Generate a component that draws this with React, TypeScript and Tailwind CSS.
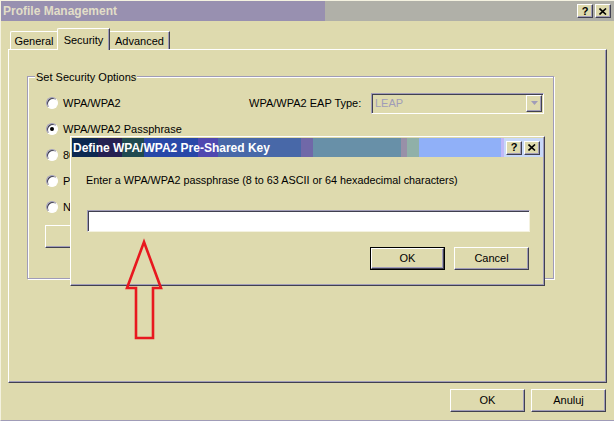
import React from "react";

const FACE = "bg-[#dedaae]";

function Btn({ label, w, def }: { label: string; w: string; def?: boolean }) {
  const inner = (
    <div
      className={`${def ? "w-full h-full" : w + " h-[23px]"} flex items-center justify-center ${FACE} border border-t-white border-l-white border-r-[#404050] border-b-[#404050] shadow-[inset_-1px_-1px_0_#a09cb8]`}
    >
      {label}
    </div>
  );
  if (def) {
    return <div className={`${w} h-[23px] border border-black`}>{inner}</div>;
  }
  return inner;
}

function TitleBtn({ kind }: { kind: "help" | "close" }) {
  return (
    <div className={`w-[16px] h-[14px] ${FACE} border border-t-white border-l-white border-r-[#404050] border-b-[#404050] shadow-[inset_-1px_-1px_0_#a09cb8] flex items-center justify-center`}>
      {kind === "help" ? (
        <span className="font-bold text-[11px] leading-none text-black">?</span>
      ) : (
        <svg width="8" height="7" viewBox="0 0 8 7">
          <path d="M0.5 0.5 L7 6.5 M7 0.5 L0.5 6.5" stroke="black" strokeWidth="1.6" fill="none" />
        </svg>
      )}
    </div>
  );
}

function Radio({ checked }: { checked?: boolean }) {
  return (
    <div className="w-[12px] h-[12px] rounded-full border border-t-[#a09cb8] border-l-[#a09cb8] border-r-white border-b-white shadow-[inset_1px_1px_0_#404050] bg-white flex items-center justify-center shrink-0">
      {checked && <div className="w-[4px] h-[4px] rounded-full bg-black" />}
    </div>
  );
}

export default function App() {
  return (
    <div className={`relative w-[614px] h-[421px] overflow-hidden ${FACE} font-['Liberation_Sans',Arial,sans-serif] text-[11px] text-black`}>
      {/* main window */}
      <div className="w-full h-full flex flex-col border-t border-l border-[#f4f2e0] border-b border-b-[#a09cb8]">
        {/* title bar */}
        <div className="h-[20px] flex items-center bg-[linear-gradient(to_right,#9890b0_0,#9890b0_324px,#b0b0a8_324px)] pr-[3px]">
          <span className="pl-[2px] font-bold text-[#e2dec8] text-[12px]">Profile Management</span>
          <div className="ml-auto flex gap-[2px]">
            <TitleBtn kind="help" />
            <TitleBtn kind="close" />
          </div>
        </div>

        <div className="pl-[7px] w-[606px]">
          {/* tabs */}
          <div className="h-[28px] flex items-end pl-[2px]">
            <div className="w-[47px] h-[18px] border-t border-l border-white rounded-tl-[2px] flex items-center justify-center pt-[1px]">
              General
            </div>
            <div className={`relative z-10 -mb-px w-[53px] h-[22px] ${FACE} border-t border-l border-white border-r border-r-[#404050] shadow-[inset_-1px_0_0_#a09cb8] rounded-tl-[2px] flex items-start justify-center pt-[3px]`}>
              Security
            </div>
            <div className="w-[60px] h-[18px] border-t border-white border-r border-r-[#404050] shadow-[inset_-1px_0_0_#a09cb8] flex items-center justify-center pt-[1px]">
              Advanced
            </div>
          </div>

          {/* tab panel */}
          <div className="h-[334px] border border-t-white border-l-white border-r-[#404050] border-b-[#404050] shadow-[inset_-1px_-1px_0_#a09cb8] pt-[26px] pl-[18px]">
            <div className="relative w-[527px] h-[203px] border border-[#a09cb8] shadow-[inset_1px_1px_0_white,1px_1px_0_white]">
              <span className={`absolute -top-[8px] left-[7px] px-[1px] ${FACE}`}>Set Security Options</span>
              <div className="flex flex-col pt-[13px] pl-[18px]">
                <div className="h-[26px] flex items-center">
                  <div className="w-[203px] flex items-center gap-[5px]">
                    <Radio />
                    <span>WPA/WPA2</span>
                  </div>
                  <span className="w-[122px]">WPA/WPA2 EAP Type:</span>
                  <div className={`w-[173px] h-[21px] border border-t-[#a09cb8] border-l-[#a09cb8] border-r-white border-b-white shadow-[inset_1px_1px_0_#404050] ${FACE} flex items-center pl-[3px] pr-[1px]`}>
                    <span className="text-[#a09cb8]">LEAP</span>
                    <div className="ml-auto w-[16px] h-[17px] border border-t-white border-l-white border-r-[#404050] border-b-[#404050] shadow-[inset_-1px_-1px_0_#a09cb8] flex items-center justify-center">
                      <svg width="7" height="4" viewBox="0 0 7 4">
                        <path d="M0 0 H7 L3.5 4 Z" fill="#a09cb8" />
                      </svg>
                    </div>
                  </div>
                </div>
                <div className="h-[26px] flex items-center gap-[5px]">
                  <Radio checked />
                  <span>WPA/WPA2 Passphrase</span>
                </div>
                <div className="h-[26px] flex items-center gap-[5px]">
                  <Radio />
                  <span>802.1x</span>
                </div>
                <div className="h-[26px] flex items-center gap-[5px]">
                  <Radio />
                  <span>Pre-Shared Key (Static WEP)</span>
                </div>
                <div className="h-[26px] flex items-center gap-[5px]">
                  <Radio />
                  <span>None</span>
                </div>
                <div className="mt-[5px] -ml-[1px]">
                  <Btn label="Configure..." w="w-[130px]" />
                </div>
              </div>
            </div>
          </div>

          {/* bottom buttons */}
          <div className="mt-[6px] flex justify-end gap-[6px] pr-[1px]">
            <Btn label="OK" w="w-[75px]" />
            <Btn label="Anuluj" w="w-[75px]" />
          </div>
        </div>
      </div>

      {/* modal dialog */}
      <div className={`absolute left-[70px] top-[136px] w-[475px] h-[150px] ${FACE} border border-t-white border-l-white border-r-[#404050] border-b-[#404050] shadow-[inset_-1px_-1px_0_#a09cb8] p-[1px] flex flex-col`}>
        <div className="h-[19px] flex items-center pr-[3px] bg-[linear-gradient(to_right,#0c2850_0_26px,#262052_26px_50px,#204a50_50px_72px,#2848a8_72px_126px,#5048b0_126px_146px,#4868a8_146px_229px,#7068a8_229px_241px,#6890a8_241px_329px,#9890a8_329px_335px,#90b0a8_335px_347px,#90b0f8_347px_429px,#c0b8f8_429px_432px,#c8d8f8_432px)]">
          <span className="pl-[1px] font-bold text-white text-[12px]">Define WPA/WPA2 Pre-Shared Key</span>
          <div className="ml-auto flex gap-[2px]">
            <TitleBtn kind="help" />
            <TitleBtn kind="close" />
          </div>
        </div>
        <div className="pl-[14px] pr-[14px] flex flex-col">
          <div className="mt-[17px] leading-[13px] text-[10.8px]">
            Enter a WPA/WPA2 passphrase (8 to 63 ASCII or 64 hexadecimal characters)
          </div>
          <div className="mt-[23px] ml-[1px] w-[443px] h-[22px] bg-white border border-t-[#a09cb8] border-l-[#a09cb8] border-r-[#f4f2e0] border-b-[#f4f2e0] shadow-[inset_1px_1px_0_#404050]" />
          <div className="mt-[15px] flex justify-end gap-[9px]">
            <Btn label="OK" w="w-[75px]" def />
            <Btn label="Cancel" w="w-[75px]" />
          </div>
        </div>
      </div>

      {/* red arrow annotation */}
      <svg className="absolute left-0 top-0 pointer-events-none" width="614" height="421" viewBox="0 0 614 421">
        <polygon
          points="144,242 161,288 153,288 153,338 136,338 136,288 127,288"
          fill="none"
          stroke="#e8181f"
          strokeWidth="2.6"
          strokeLinejoin="miter"
        />
      </svg>
    </div>
  );
}
